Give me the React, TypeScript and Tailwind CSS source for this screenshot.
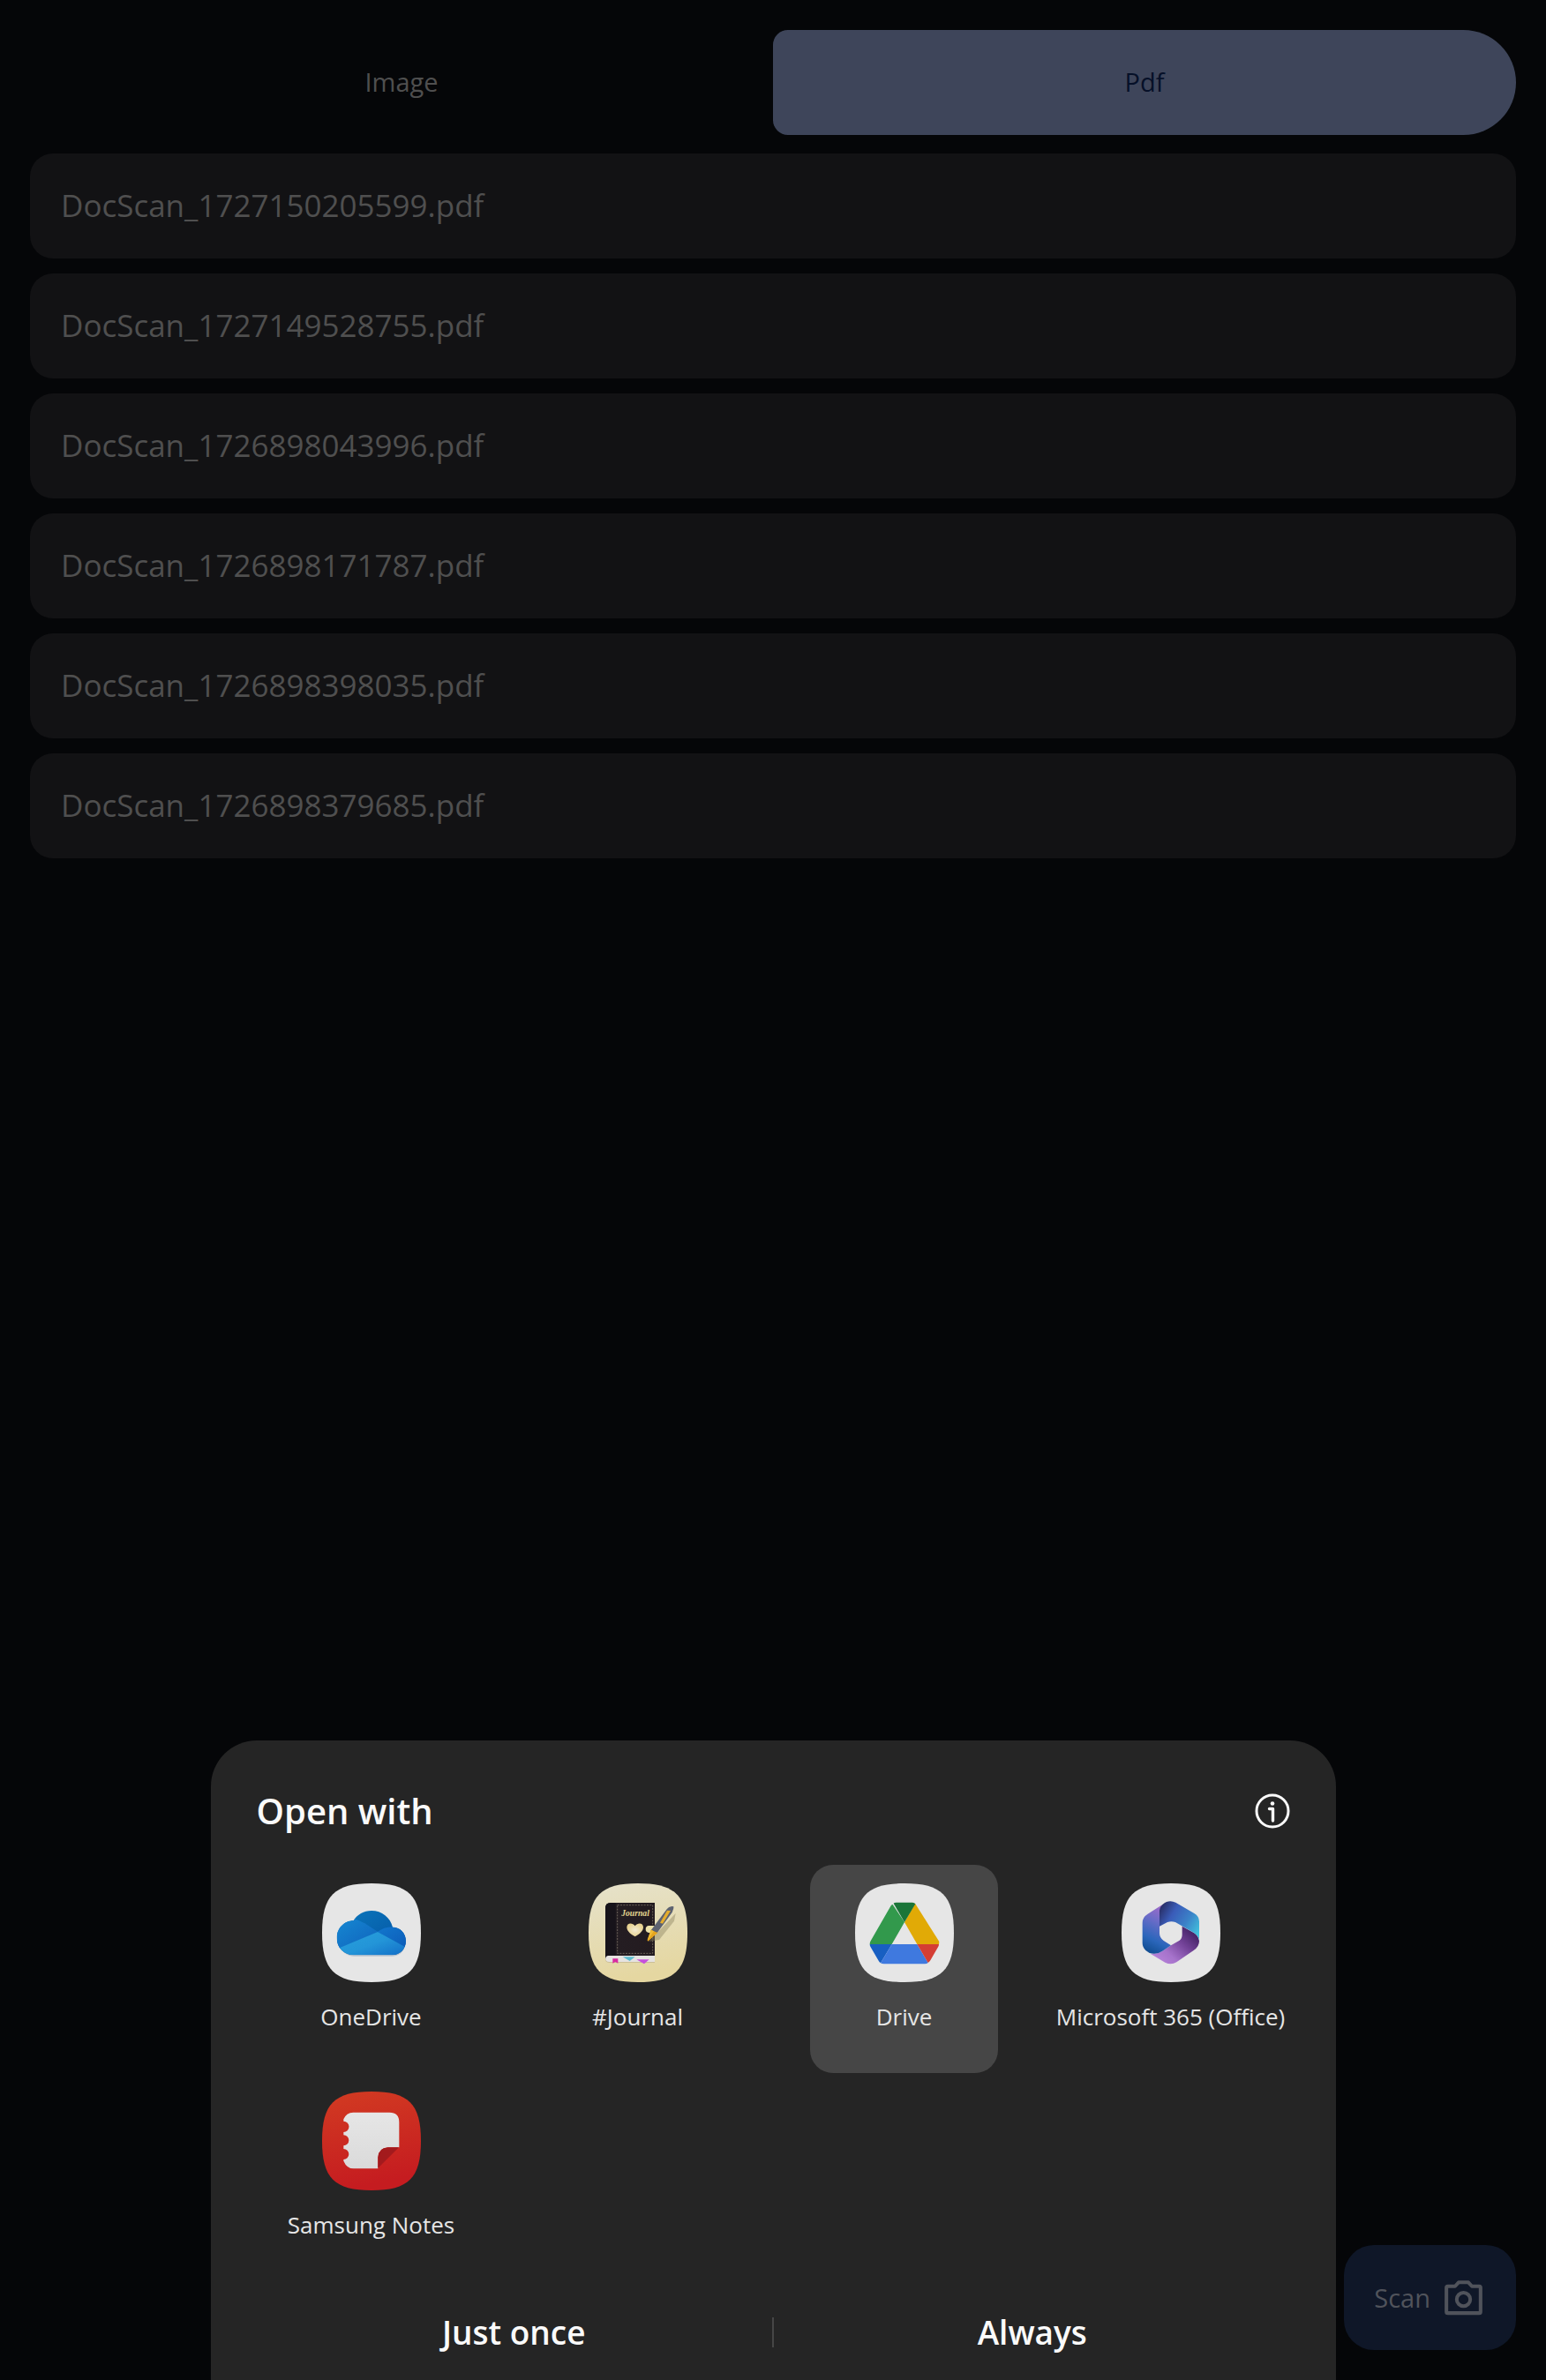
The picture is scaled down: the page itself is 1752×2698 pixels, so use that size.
import type { ReactNode } from "react";

const files = [
  "DocScan_1727150205599.pdf",
  "DocScan_1727149528755.pdf",
  "DocScan_1726898043996.pdf",
  "DocScan_1726898171787.pdf",
  "DocScan_1726898398035.pdf",
  "DocScan_1726898379685.pdf",
];

const SQUIRCLE =
  "M168 0C294 0 336 42 336 168S294 336 168 336S0 294 0 168S42 0 168 0Z";

function AppIcon({ fill, children }: { fill: string; children: ReactNode }) {
  return (
    <svg viewBox="0 0 336 336" className="size-28 shrink-0" aria-hidden="true">
      <path d={SQUIRCLE} fill={fill} />
      {children}
    </svg>
  );
}

function OneDriveIcon() {
  return (
    <AppIcon fill="#e6e6e6">
      <defs>
        <linearGradient id="od-back" x1="0" y1="0" x2="1" y2="1">
          <stop offset="0" stopColor="#0b78bd" />
          <stop offset="1" stopColor="#0450a0" />
        </linearGradient>
        <linearGradient id="od-left" x1="0" y1="0" x2="1" y2="1">
          <stop offset="0" stopColor="#1689d2" />
          <stop offset="1" stopColor="#0f62bd" />
        </linearGradient>
        <linearGradient id="od-right" x1="0" y1="0" x2="1" y2="1">
          <stop offset="0" stopColor="#1277cd" />
          <stop offset="1" stopColor="#0c5bb8" />
        </linearGradient>
        <linearGradient id="od-front" x1="0" y1="0" x2="1" y2="1">
          <stop offset="0" stopColor="#27a0dc" />
          <stop offset="0.5" stopColor="#2395d8" />
          <stop offset="1" stopColor="#116bc6" />
        </linearGradient>
        <clipPath id="od-cloud">
          <path d="M107 127C119 106 142 93 168 93C203 93 232 116 240 149C265 149 285 169 285 196C285 223 265 244 238 244H108C75 244 50 219 50 186C50 153 76 127 107 127Z" />
        </clipPath>
      </defs>
      <path
        d="M62 220C74 239 90 248 108 248H238C256 248 272 239 280 220Z"
        fill="#b9c4cf"
      />
      <g clipPath="url(#od-cloud)">
        <rect x="50" y="93" width="240" height="155" fill="url(#od-back)" />
        <path d="M40 120H107C122 125 134 130 145 136L190 165L52 224L40 220Z" fill="url(#od-left)" />
        <path d="M188 165C202 155 220 148 240 148H290V222Z" fill="url(#od-right)" />
        <path d="M55 221L189 165L282 216V250H55Z" fill="url(#od-front)" />
      </g>
    </AppIcon>
  );
}

function JournalIcon() {
  return (
    <AppIcon fill="url(#jr-bg)">
      <defs>
        <linearGradient id="jr-bg" x1="0" y1="0" x2="0.2" y2="1">
          <stop offset="0" stopColor="#e6e2cb" />
          <stop offset="1" stopColor="#e5d7a1" />
        </linearGradient>
        <linearGradient id="jr-cover" x1="0" y1="0" x2="1" y2="0">
          <stop offset="0" stopColor="#171318" />
          <stop offset="0.25" stopColor="#241d22" />
          <stop offset="1" stopColor="#231b20" />
        </linearGradient>
        <radialGradient id="jr-heart">
          <stop offset="0" stopColor="#f2ead2" />
          <stop offset="1" stopColor="#e8d290" />
        </radialGradient>
      </defs>
      <path d="M60 254H225V270H72Q57 270 57 258Z" fill="#cbbf98" />
      <path d="M57 238H225V267H70Q57 267 57 252Z" fill="#e6e3e0" />
      <path d="M57 84Q57 66 75 66H225V246H66Q57 246 57 258Z" fill="url(#jr-cover)" />
      <path d="M57 84Q57 66 75 66H92V246H66Q57 246 57 258Z" fill="#17131a" />
      <rect x="98" y="74" width="120" height="164" fill="none" stroke="#8e8576" strokeWidth="2" strokeDasharray="6 4" />
      <text
        x="159"
        y="112"
        textAnchor="middle"
        fontFamily="Liberation Serif, serif"
        fontStyle="italic"
        fontWeight="700"
        fontSize="29"
        fill="#e3d691"
      >
        Journal
      </text>
      <path d="M158 181C139 170 130 160 130 149C130 134 149 132 158 145C167 132 186 134 186 149C186 160 177 170 158 181Z" fill="url(#jr-heart)" />
      <path d="M205 144H225V168H205Q194 167 194 156T205 144Z" fill="#ece0a9" />
      <path d="M296 102L291 128L240 192L205 198Z" fill="#8f8562" opacity="0.45" />
      <path d="M289 79L283 78Q272 79 266 88L212 160L201 196L235 166L284 99Q290 88 289 79Z" fill="#5d6270" />
      <path d="M212 158L235 168L202 197Q198 194 201 188Z" fill="#e6a51e" />
      <path d="M212 158L222 163L201 193Z" fill="#f0bc35" />
      <path d="M267 92L279 93L252 137L243 134Z" fill="#e4ac2c" />
      <path d="M82 256H100V272L91 267L82 272Z" fill="#d92aa0" />
      <path d="M116 250H158L140 264Z" fill="#5cbcd0" />
      <path d="M163 259H206L189 274Z" fill="#c64fdd" />
    </AppIcon>
  );
}

function DriveIcon() {
  return (
    <AppIcon fill="#e6e6e6">
      <path d="M128 72L168 132L125 207H50Q50 201 53 196L122 76Q125 72 128 72Z" fill="#32994c" />
      <path d="M204 68L286 198Q286 204 285 207H211L168 132Z" fill="#e1aa06" />
      <path d="M131 68Q133 65 140 65H195Q202 65 205 70L168 132Z" fill="#1a7538" />
      <path d="M50 207H125L87 271Q83 268 80 263L53 217Q50 212 50 207Z" fill="#185fc2" />
      <path d="M125 207H211L248 270Q244 274 237 274H98Q91 274 87 271Z" fill="#3f79df" />
      <path d="M211 207H285Q285 212 282 217L256 262Q253 267 248 270Z" fill="#d43e34" />
    </AppIcon>
  );
}

function OfficeIcon() {
  return (
    <AppIcon fill="#e6e6e6">
      <defs>
        <linearGradient id="ms-left" x1="0.7" y1="0" x2="0.4" y2="1">
          <stop offset="0" stopColor="#a56bca" />
          <stop offset="0.35" stopColor="#6c6cc8" />
          <stop offset="0.75" stopColor="#2a66bb" />
          <stop offset="1" stopColor="#144f94" />
        </linearGradient>
        <linearGradient id="ms-top" x1="0" y1="0.2" x2="1" y2="0.8">
          <stop offset="0" stopColor="#292e67" />
          <stop offset="0.3" stopColor="#3a5cb9" />
          <stop offset="0.65" stopColor="#3b82c8" />
          <stop offset="1" stopColor="#41c3dd" />
        </linearGradient>
        <linearGradient id="ms-bottom" x1="0.1" y1="1" x2="0.95" y2="0.3">
          <stop offset="0" stopColor="#ba86dc" />
          <stop offset="0.35" stopColor="#a673cb" />
          <stop offset="0.7" stopColor="#744399" />
          <stop offset="1" stopColor="#49266b" />
        </linearGradient>
      </defs>
      <path d="M206 146L247 169Q261 178 264 196Q264 216 245 228L187 268Q168 279 148 269L98 239Q121 242 139 230L168 211L197 194Q206 188 206 175Z" fill="url(#ms-bottom)" />
      <path d="M138 73L89 104Q71 115 71 134V203Q71 216 82 228L95 237Q119 244 139 230L168 211L143 195Q129 185 129 169V96Z" fill="url(#ms-left)" />
      <path d="M129 146V92Q131 77 146 67L153 63Q168 57 184 65L247 102Q264 112 264 130V193Q261 178 247 169L183 132Q169 127 156 132Z" fill="url(#ms-top)" />
    </AppIcon>
  );
}

function NotesIcon() {
  return (
    <AppIcon fill="url(#sn-bg)">
      <defs>
        <linearGradient id="sn-bg" x1="0" y1="0" x2="0.2" y2="1">
          <stop offset="0" stopColor="#d23b22" />
          <stop offset="1" stopColor="#c51c20" />
        </linearGradient>
        <linearGradient id="sn-page" x1="0" y1="0" x2="0" y2="1">
          <stop offset="0" stopColor="#e6e6e6" />
          <stop offset="1" stopColor="#dadada" />
        </linearGradient>
      </defs>
      <path
        d="M262 190V104Q262 71 229 71H106Q82 72 73 94V101A18 18 0 0 1 73 138V148A18 18 0 0 1 73 184V195A18 18 0 0 1 73 231V236Q84 262 107 262H190V224Q192 192 224 190Z"
        fill="url(#sn-page)"
      />
      <path d="M190 260V224Q192 192 224 190H261Z" fill="#a31a1d" />
    </AppIcon>
  );
}

const apps = [
  { name: "OneDrive", icon: <OneDriveIcon /> },
  { name: "#Journal", icon: <JournalIcon /> },
  { name: "Drive", icon: <DriveIcon />, selected: true },
  { name: "Microsoft 365 (Office)", icon: <OfficeIcon /> },
  { name: "Samsung Notes", icon: <NotesIcon /> },
];

function InfoIcon() {
  return (
    <svg viewBox="0 0 40 40" className="size-10" fill="none" stroke="#fafafa" aria-hidden="true">
      <circle cx="20" cy="20" r="18" strokeWidth="3" />
      <path d="M16.5 17.5H20.5V31" strokeWidth="3.4" strokeLinecap="round" strokeLinejoin="round" />
      <circle cx="20" cy="11.5" r="2.3" fill="#fafafa" stroke="none" />
    </svg>
  );
}

function CameraIcon() {
  return (
    <svg viewBox="0 -1 24 24" className="size-[51px]" fill="none" stroke="currentColor" aria-hidden="true">
      <path d="M9.4 2.9H14.6L16.5 5H20.4Q21.1 5 21.1 5.7V18.6Q21.1 19.3 20.4 19.3H3.6Q2.9 19.3 2.9 18.6V5.7Q2.9 5 3.6 5H7.5Z" strokeWidth="1.9" strokeLinejoin="round" />
      <circle cx="12" cy="12" r="3.6" strokeWidth="1.9" />
    </svg>
  );
}

export default function App() {
  return (
    <div className="relative min-h-screen bg-[#050608] font-['Open_Sans','Noto_Sans',sans-serif]">
      <main className="px-[34px] pt-[34px]">
        <div role="tablist" className="grid grid-cols-2 text-[29px] leading-10">
          <button role="tab" aria-selected="false" className="h-[119px] pb-0.5 text-[#4f4f4f]">
            Image
          </button>
          <button
            role="tab"
            aria-selected="true"
            className="h-[119px] rounded-l-[17px] rounded-r-[60px] bg-[#3e455a] pb-0.5 text-[#061028]"
          >
            Pdf
          </button>
        </div>
        <ul className="mt-[21px] flex flex-col gap-[17px]">
          {files.map((file) => (
            <li key={file}>
              <button className="flex h-[119px] w-full items-center rounded-[26px] bg-[#121214] px-[35px] pb-0.5 text-left text-[35px] leading-[48px] text-[#4f4f4f]">
                {file}
              </button>
            </li>
          ))}
        </ul>
      </main>

      <button className="absolute right-[34px] bottom-[34px] flex h-[119px] items-center gap-3 rounded-[34px] bg-[#0f1728] px-[34px] text-[29px] leading-10 text-[#50535b]">
        Scan
        <CameraIcon />
      </button>

      <section
        role="dialog"
        aria-labelledby="open-with"
        className="absolute inset-x-0 bottom-0 mx-auto w-full max-w-[1275px] rounded-t-[52px] bg-[#252525] pt-[50px] pb-[18px]"
      >
        <header className="flex items-center justify-between px-[52px]">
          <h2 id="open-with" className="text-[40px] leading-[60px] font-semibold text-[#fafafa]">
            Open with
          </h2>
          <button aria-label="App info">
            <InfoIcon />
          </button>
        </header>
        <div className="mt-[31px] grid grid-cols-4 pr-9 pl-[31px]">
          {apps.map((app) => (
            <button
              key={app.name}
              className="flex h-[236px] justify-center text-[26px] leading-9 whitespace-nowrap text-[#e6e6e6]"
            >
              <span
                className={
                  app.selected
                    ? "flex h-full w-[213px] flex-col items-center gap-[21px] rounded-[26px] bg-[#464646] pt-[21px]"
                    : "flex h-full w-[213px] flex-col items-center gap-[21px] pt-[21px]"
                }
              >
                {app.icon}
                <span>{app.name}</span>
              </span>
            </button>
          ))}
        </div>
        <footer className="mt-[22px] flex items-center px-[51px] text-[37px] leading-[72px] font-semibold text-[#fafafa]">
          <button className="flex-1">Just once</button>
          <span className="h-[34px] w-0.5 bg-[#464646]" />
          <button className="flex-1">Always</button>
        </footer>
      </section>
    </div>
  );
}
